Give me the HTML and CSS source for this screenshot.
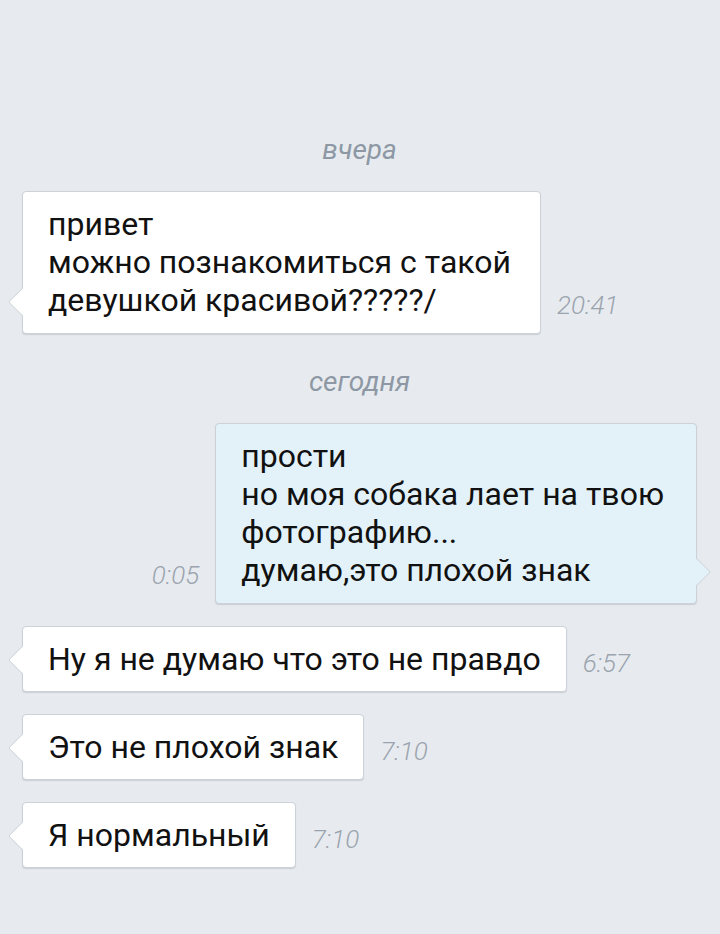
FILE: index.html
```html
<!DOCTYPE html>
<html lang="ru">
<head>
    <meta charset="UTF-8">
    <title>Сообщения</title>
    <link rel="stylesheet" href="styles.css">
</head>
<body>
    <div class="chat">
        <div class="day">вчера</div>
        <div class="row in">
            <div class="bubble multi">привет<br>можно познакомиться с такой<br>девушкой красивой?????/</div>
            <div class="time">20:41</div>
        </div>

        <div class="day">сегодня</div>
        <div class="row out">
            <div class="time">0:05</div>
            <div class="bubble multi wide">прости<br>но моя собака лает на твою<br>фотографию...<br>думаю,это плохой знак</div>
        </div>
        <div class="row in">
            <div class="bubble">Ну я не думаю что это не правдо</div>
            <div class="time">6:57</div>
        </div>
        <div class="row in">
            <div class="bubble">Это не плохой знак</div>
            <div class="time">7:10</div>
        </div>
        <div class="row in">
            <div class="bubble">Я нормальный</div>
            <div class="time">7:10</div>
        </div>
    </div>
</body>
</html>
```

FILE: styles.css
```css
html, body {
    margin: 0;
    height: 100%;
}

body {
    background: #e7ebef;
    font-family: Roboto, "Noto Sans", sans-serif;
    color: #111;
}

.chat {
    padding: 133px 23px 0 22px;
}

.day {
    text-align: center;
    font-size: 28px;
    line-height: 34px;
    font-style: italic;
    color: #8d98a4;
    margin-bottom: 24px;
}

.row + .day {
    margin-top: 31px;
}

.row {
    display: flex;
    align-items: flex-end;
    gap: 16px;
}

.row + .row {
    margin-top: 22px;
}

.row.out {
    justify-content: flex-end;
}

.bubble {
    position: relative;
    background: #fff;
    border: 1px solid #cbd2d9;
    border-radius: 4px;
    box-shadow: 0 1px 1px rgba(0, 0, 0, 0.12);
    padding: 13px 25px 13px;
    font-size: 32px;
    line-height: 38px;
}

.bubble.multi {
    padding-right: 29px;
    padding-bottom: 14px;
}

.bubble.wide {
    padding-right: 32px;
}

.bubble::before {
    content: "";
    position: absolute;
    bottom: 21px;
    width: 19px;
    height: 19px;
    background: inherit;
    border: 1px solid #cbd2d9;
    border-radius: 2px;
    transform: rotate(45deg);
}

.in .bubble::before {
    left: -11px;
    border-top: none;
    border-right: none;
}

.out .bubble {
    background: #e3f1f9;
}

.out .bubble::before {
    right: -11px;
    border-bottom: none;
    border-left: none;
}

.time {
    font-size: 26px;
    line-height: 38px;
    font-style: italic;
    font-weight: 300;
    color: #9ba4ae;
    padding-bottom: 10px;
}
```
